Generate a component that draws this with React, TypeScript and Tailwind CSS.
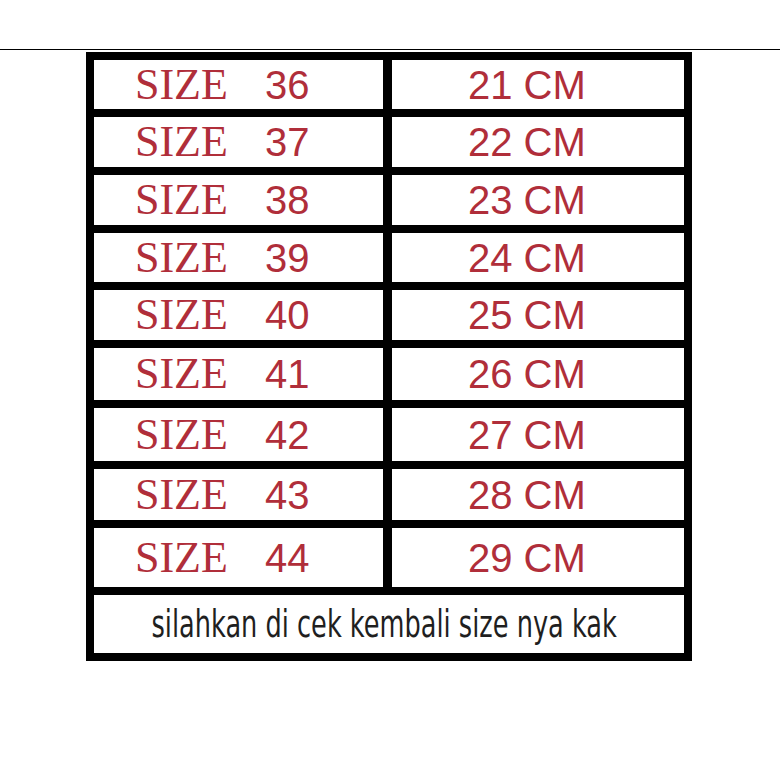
const ROWS = [
  { size: 36, cm: 21, h: 'h-[49px]' },
  { size: 37, cm: 22, h: 'h-[50px]' },
  { size: 38, cm: 23, h: 'h-[50px]' },
  { size: 39, cm: 24, h: 'h-[49px]' },
  { size: 40, cm: 25, h: 'h-[50px]' },
  { size: 41, cm: 26, h: 'h-[52px]' },
  { size: 42, cm: 27, h: 'h-[53px]' },
  { size: 43, cm: 28, h: 'h-[51px]' },
  { size: 44, cm: 29, h: 'h-[59px]' },
];

const serif = { fontFamily: '"Liberation Serif", "Times New Roman", serif' };

export default function App() {
  return (
    <div className="w-[780px] h-[780px] bg-white pt-[49px]">
      {/* thin rule across the top */}
      <div className="h-px bg-black" />

      {/* size chart */}
      <div className="ml-[86px] mt-[2px] w-[606px] border-8 border-black bg-white">
        {ROWS.map((row, i) => (
          <div
            key={row.size}
            className={['flex', i > 0 ? 'border-t-8 border-black' : ''].join(' ')}
          >
            <div className={`${row.h} w-[289px] flex items-center pl-[41px] text-[#b02e3a]`}>
              <span className="inline-block w-[130px] text-[44px] leading-none" style={serif}>
                SIZE
              </span>
              <span className="text-[40px] leading-none font-['Liberation_Sans',Arial,sans-serif]">
                {row.size}
              </span>
            </div>
            <div
              className={`${row.h} flex-1 border-l-[9px] border-black flex items-center pl-[76px] text-[40px] leading-none text-[#b02e3a] font-['Liberation_Sans',Arial,sans-serif]`}
            >
              {row.cm} CM
            </div>
          </div>
        ))}

        {/* note row */}
        <div className="h-[66px] border-t-8 border-black flex items-center justify-center pr-[10px]">
          <span className="inline-block whitespace-nowrap text-[37px] leading-none text-[#1f1f1f] font-['Liberation_Sans_Narrow','DejaVu_Sans_Condensed',sans-serif] [transform:scaleX(0.77)]">
            silahkan di cek kembali size nya kak
          </span>
        </div>
      </div>
    </div>
  );
}
